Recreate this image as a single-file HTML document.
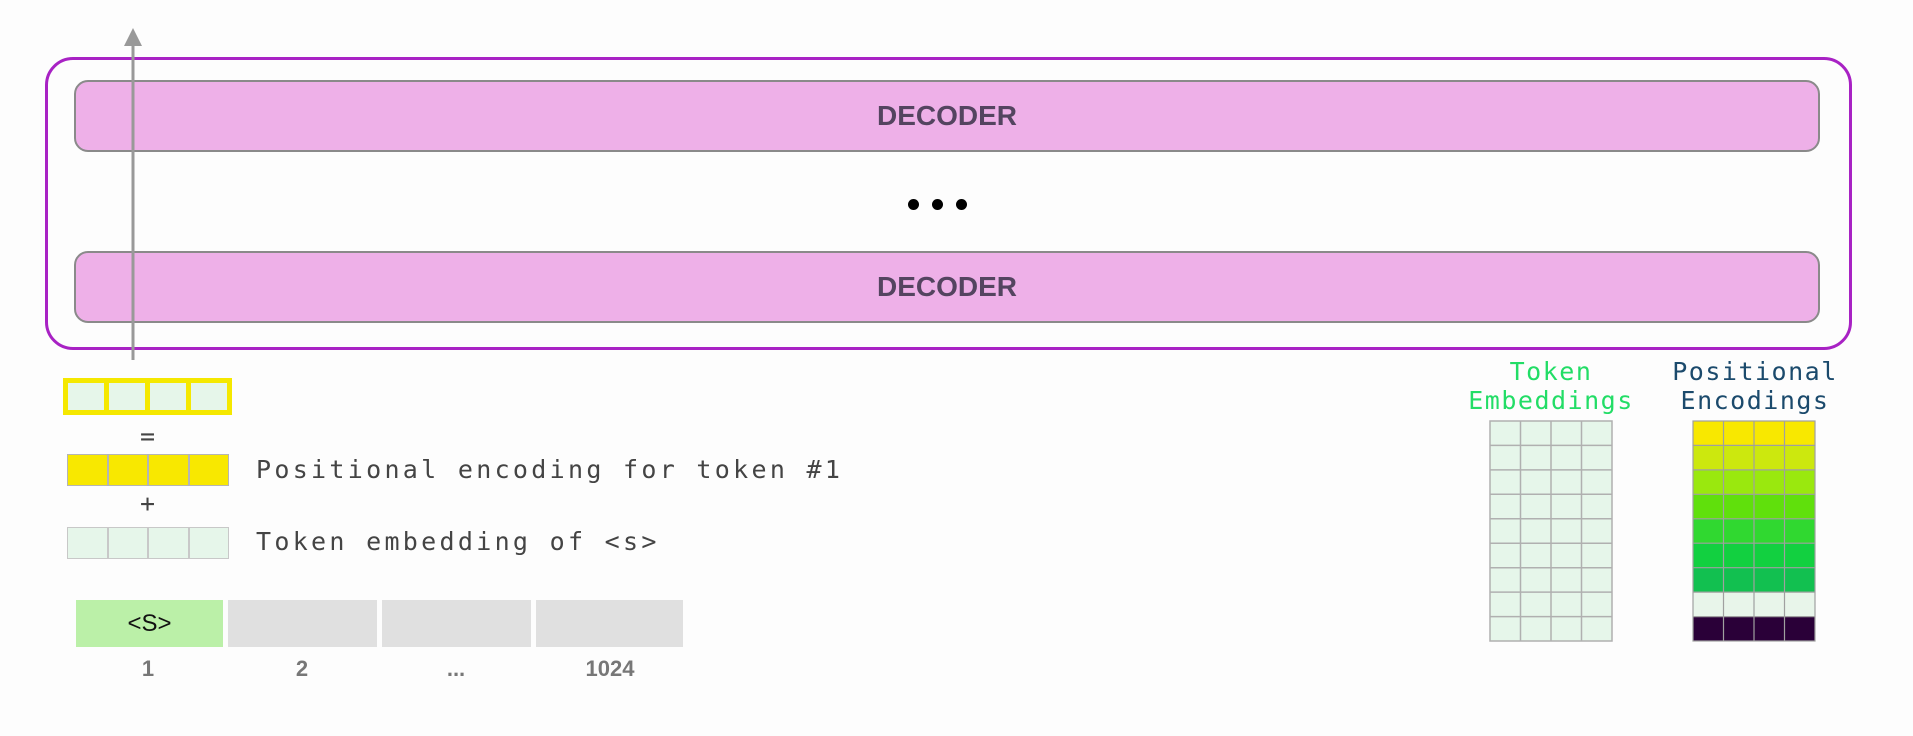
<!DOCTYPE html>
<html><head><meta charset="utf-8"><style>
body{margin:0;width:1913px;height:736px;background:#fdfdfd;position:relative;overflow:hidden;font-family:"Liberation Sans",sans-serif}
div{position:absolute;box-sizing:border-box}
.outer{left:45px;top:57px;width:1807px;height:293px;border:3px solid #a822c4;border-radius:28px}
.dec{left:74px;width:1746px;height:72px;background:#eeb0e8;border:2px solid #8a8a8a;border-radius:14px;color:#544460;font-size:28px;font-weight:bold;text-align:center;line-height:68px}
.dot{width:11px;height:11px;border-radius:50%;background:#000;top:199px}
.row{display:flex}
.cell{position:relative;border:1px solid #b5b5b5}
.mono{font-family:"DejaVu Sans Mono","Liberation Mono",monospace;color:#444;font-size:25px;letter-spacing:3.3px;white-space:nowrap}
.tok{height:47px;top:600px;background:#e0e0e0}
.num{top:656px;font-size:22px;font-weight:bold;color:#777;width:100px;text-align:center}
.title{font-family:"DejaVu Sans Mono","Liberation Mono",monospace;font-size:25px;letter-spacing:1.5px;text-align:center;line-height:29px;white-space:nowrap}
</style></head><body>
<div class="outer"></div>
<div class="dec" style="top:80px">DECODER</div>
<div class="dec" style="top:251px">DECODER</div>
<div class="dot" style="left:908px"></div><div class="dot" style="left:932px"></div><div class="dot" style="left:956px"></div>
<svg style="position:absolute;left:0;top:0" width="300" height="400"><line x1="133" y1="40" x2="133" y2="360" stroke="#999" stroke-width="3"/><polygon points="124,46 142,46 133,28" fill="#999"/></svg>

<div style="left:63px;top:378px;width:169px;height:37px;border:4px solid #f5e800;background:#f5e800;display:flex;gap:5px;padding:1px">
<div style="position:relative;flex:1;background:#e6f6ea"></div><div style="position:relative;flex:1;background:#e6f6ea"></div><div style="position:relative;flex:1;background:#e6f6ea"></div><div style="position:relative;flex:1;background:#e6f6ea"></div></div>
<div class="mono" style="left:140px;top:422px;letter-spacing:0">=</div>
<div class="row" style="left:67px;top:454px;width:162px;height:32px">
<div class="cell" style="flex:1;background:#f8e800"></div><div class="cell" style="flex:1;background:#f8e800"></div><div class="cell" style="flex:1;background:#f8e800"></div><div class="cell" style="flex:1;background:#f8e800"></div></div>
<div class="mono" style="left:256px;top:455px">Positional encoding for token #1</div>
<div class="mono" style="left:140px;top:489px;letter-spacing:0">+</div>
<div class="row" style="left:67px;top:527px;width:162px;height:32px">
<div class="cell" style="flex:1;background:#e6f6ea;border-color:#c8c8c8"></div><div class="cell" style="flex:1;background:#e6f6ea;border-color:#c8c8c8"></div><div class="cell" style="flex:1;background:#e6f6ea;border-color:#c8c8c8"></div><div class="cell" style="flex:1;background:#e6f6ea;border-color:#c8c8c8"></div></div>
<div class="mono" style="left:256px;top:527px">Token embedding of &lt;s&gt;</div>

<div class="tok" style="left:76px;width:147px;background:#bbf0a8;font-size:24px;text-align:center;line-height:47px;color:#111">&lt;S&gt;</div>
<div class="tok" style="left:228px;width:149px"></div>
<div class="tok" style="left:382px;width:149px"></div>
<div class="tok" style="left:536px;width:147px"></div>
<div class="num" style="left:98px">1</div>
<div class="num" style="left:252px">2</div>
<div class="num" style="left:406px">...</div>
<div class="num" style="left:560px">1024</div>

<div class="title" style="left:1441px;width:220px;top:357px;color:#22dd66">Token<br>Embeddings</div>
<div class="title" style="left:1645px;width:220px;top:357px;color:#1b4a6c">Positional<br>Encodings</div>
<svg style="position:absolute;left:1488px;top:419px" width="340" height="226">
<rect x="2" y="2" width="122" height="220" fill="#e6f6ea" stroke="#b0b0b0" stroke-width="1.5"/>
<g stroke="#b0b0b0" stroke-width="1.5">
<line x1="32.5" y1="2" x2="32.5" y2="222"/><line x1="63" y1="2" x2="63" y2="222"/><line x1="93.5" y1="2" x2="93.5" y2="222"/>
<line x1="2" y1="26.4" x2="124" y2="26.4"/><line x1="2" y1="50.9" x2="124" y2="50.9"/><line x1="2" y1="75.3" x2="124" y2="75.3"/><line x1="2" y1="99.8" x2="124" y2="99.8"/><line x1="2" y1="124.2" x2="124" y2="124.2"/><line x1="2" y1="148.7" x2="124" y2="148.7"/><line x1="2" y1="173.1" x2="124" y2="173.1"/><line x1="2" y1="197.6" x2="124" y2="197.6"/>
</g>
<g transform="translate(205,0)">
<rect x="0" y="2" width="122" height="24.4" fill="#f8e800"/>
<rect x="0" y="26.4" width="122" height="24.5" fill="#cce80e"/>
<rect x="0" y="50.9" width="122" height="24.4" fill="#9ae80e"/>
<rect x="0" y="75.3" width="122" height="24.5" fill="#60e00c"/>
<rect x="0" y="99.8" width="122" height="24.4" fill="#30d830"/>
<rect x="0" y="124.2" width="122" height="24.5" fill="#12d040"/>
<rect x="0" y="148.7" width="122" height="24.4" fill="#12c050"/>
<rect x="0" y="173.1" width="122" height="24.5" fill="#e8f5ea"/>
<rect x="0" y="197.6" width="122" height="24.4" fill="#2a0038"/>
<g stroke="#a0a0a0" stroke-width="1.2" fill="none">
<rect x="0" y="2" width="122" height="220"/>
<line x1="30.5" y1="2" x2="30.5" y2="222"/><line x1="61" y1="2" x2="61" y2="222"/><line x1="91.5" y1="2" x2="91.5" y2="222"/>
<line x1="0" y1="26.4" x2="122" y2="26.4"/><line x1="0" y1="50.9" x2="122" y2="50.9"/><line x1="0" y1="75.3" x2="122" y2="75.3"/><line x1="0" y1="99.8" x2="122" y2="99.8"/><line x1="0" y1="124.2" x2="122" y2="124.2"/><line x1="0" y1="148.7" x2="122" y2="148.7"/><line x1="0" y1="173.1" x2="122" y2="173.1"/><line x1="0" y1="197.6" x2="122" y2="197.6"/>
</g></g>
</svg>
</body></html>
